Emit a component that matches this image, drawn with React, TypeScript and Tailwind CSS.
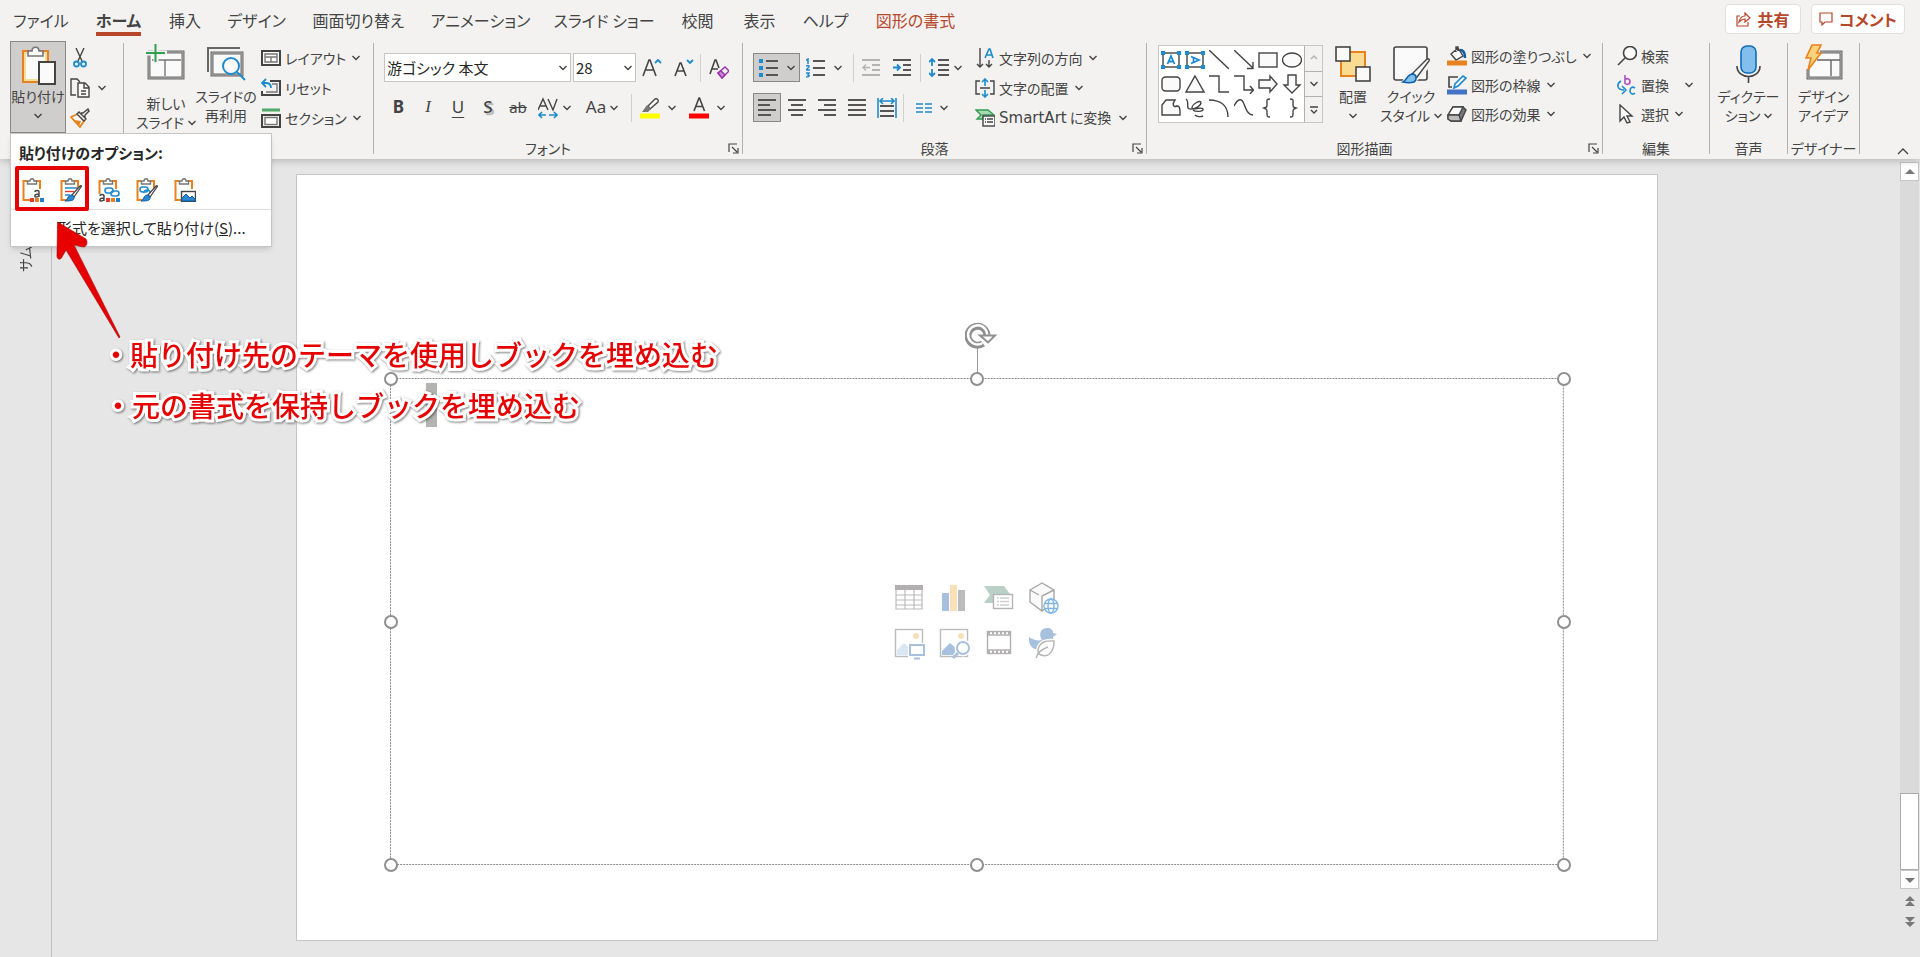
import type { ReactNode } from "react";

const INK = "#444444";
const BLUE = "#1e8bcd";
const ORANGE = "#e8821e";

interface IconProps {
  w?: number;
  h?: number;
  children: ReactNode;
}

function Icon({ w = 20, h = 20, children }: IconProps) {
  return (
    <svg
      width={w}
      height={h}
      viewBox={`0 0 ${w} ${h}`}
      fill="none"
      stroke={INK}
      strokeWidth={1.4}
      className="shrink-0"
      aria-hidden="true"
    >
      {children}
    </svg>
  );
}

function Chevron() {
  return (
    <Icon w={8} h={6}>
      <path d="M0.500 1L4 4.500 7.500 1" />
    </Icon>
  );
}

function Divider() {
  return <div className="mt-0.5 h-[111px] w-px shrink-0 bg-[#b3b0ad]" />;
}

function ThinDivider() {
  return <div className="h-7 w-px shrink-0 bg-[#d2d0ce]" />;
}

function Launcher() {
  return (
    <button type="button" aria-label="ダイアログを開く" className="absolute right-[3px] bottom-px">
      <Icon w={11} h={11}>
        <path d="M1 9V1h8M4 4l5 5M10 5v5H5" strokeWidth={1.2} />
      </Icon>
    </button>
  );
}

interface GroupProps {
  label?: string;
  width: string;
  launcher?: boolean;
  children: ReactNode;
}

function Group({ label, width, launcher, children }: GroupProps) {
  return (
    <section className={`relative flex h-[114px] shrink-0 flex-col ${width}`}>
      <div className="flex h-[92px] shrink-0">{children}</div>
      {label && (
        <p className={`mt-1 shrink-0 text-center leading-[22px] ${launcher ? "pr-5" : ""}`}>{label}</p>
      )}
      {launcher && <Launcher />}
    </section>
  );
}

interface SmallButtonProps {
  icon: ReactNode;
  label: string;
  chevron?: boolean;
  wide?: boolean;
}

function SmallButton({ icon, label, chevron, wide }: SmallButtonProps) {
  return (
    <button type="button" className="flex flex-1 items-center gap-1 whitespace-nowrap">
      {icon}
      <span>{label}</span>
      {chevron && (
        <span className={wide ? "pl-3" : "pl-0.5"}>
          <Chevron />
        </span>
      )}
    </button>
  );
}

interface LargeButtonProps {
  icon: ReactNode;
  lines: string[];
  width: string;
  chevron?: "below" | "inline";
  low?: boolean;
  active?: boolean;
}

function LargeButton({ icon, lines, width, chevron, low, active }: LargeButtonProps) {
  return (
    <button
      type="button"
      className={`flex h-[92px] shrink-0 flex-col items-center whitespace-nowrap leading-[19px] ${width} ${
        active ? "bg-[#d0cecc] outline-1 -outline-offset-1 outline-[#8a8886]" : ""
      }`}
    >
      <span className={`flex h-[46px] items-center ${low ? "mb-[7px]" : ""}`}>{icon}</span>
      {lines.map((line, i) => (
        <span key={line} className="flex items-center gap-1">
          {line}
          {chevron === "inline" && i === lines.length - 1 && <Chevron />}
        </span>
      ))}
      {chevron === "below" && (
        <span className="flex h-[19px] items-center">
          <Chevron />
        </span>
      )}
    </button>
  );
}

/* ---------- clipboard ---------- */

const pasteIcon = (
  <Icon w={38} h={44}>
    <rect x="4" y="9" width="25" height="31" fill="#f8dc9a" stroke={ORANGE} strokeWidth="2" />
    <rect x="7" y="12" width="19" height="25" fill="#fafafa" stroke="none" />
    <path d="M9 14V9h4c0-5 7-5 7 0h4v5z" fill="#fafafa" stroke="#777" strokeWidth="1.6" />
    <rect x="20" y="20" width="16" height="22" fill="#fafafa" strokeWidth="2" />
  </Icon>
);

const cutIcon = (
  <Icon>
    <path d="M6 0l6 13M14 0L8 13" />
    <circle cx="6.500" cy="16" r="2.500" stroke={BLUE} strokeWidth="1.800" />
    <circle cx="13.500" cy="16" r="2.500" stroke={BLUE} strokeWidth="1.800" />
  </Icon>
);

const copyIcon = (
  <Icon>
    <path d="M6 17H1V1h6l3 3" />
    <path d="M8 5h7l4 4v10H8zM14 5v5h5M11 13h5M11 16h5" fill="#fafafa" />
  </Icon>
);

const formatPainterIcon = (
  <Icon>
    <path d="M1 9l7-3 6 7-4 6z" fill="#fafafa" stroke={ORANGE} strokeWidth="1.800" />
    <path d="M4 12l7 1-2 5z" fill={ORANGE} stroke="none" />
    <path d="M7 6l2-2 7 7-2 2zM11 5l2 0 5-4 1 2-4 4v3" fill="#fafafa" />
  </Icon>
);

/* clipboard outline shared by the paste option icons */
function Board() {
  return (
    <>
      <path d="M5 3H1.500v19H8M14 3h4v8" stroke={ORANGE} strokeWidth="2" />
      <path d="M5.500 6V3h2.500c0-3 4-3 4 0h2.500v3z" fill="#fff" stroke="#777" />
    </>
  );
}

function Brush() {
  return (
    <>
      <path d="M12 17l8-9c1-1 2 0 1 1l-7 10z" fill="#fff" strokeWidth="1.200" />
      <path d="M5 23c3-1 2-5 6-6 3 0 4 3 2 5-2 1-5 1-8 1z" fill="#2b88d0" stroke="#0f5ea8" strokeWidth="1" />
    </>
  );
}

function LinkMark() {
  return (
    <g stroke={BLUE} strokeWidth="1.600">
      <rect x="7" y="10" width="8" height="5" rx="2.500" />
      <rect x="13" y="13" width="8" height="5" rx="2.500" />
    </g>
  );
}

function Swatches() {
  return (
    <g stroke="none">
      <path d="M8 20h4v4H8z" fill="#e03c32" />
      <path d="M13 20h4v4h-4z" fill={ORANGE} />
      <path d="M18 20h4v4h-4z" fill="#1e7fd0" />
    </g>
  );
}

const pasteOptions = [
  {
    name: "貼り付け先のテーマを使用しブックを埋め込む",
    icon: (
      <Icon w={22} h={24}>
        <Board />
        <path d="M17 19v-5c0-2-4-2-4 0M17 16c-5 0-5 3-3 3 1.500 0 3-1 3-2" />
        <Swatches />
      </Icon>
    ),
  },
  {
    name: "元の書式を保持しブックを埋め込む",
    icon: (
      <Icon w={22} h={24}>
        <Board />
        <path d="M5 10h12M5 17h5" stroke={BLUE} />
        <path d="M5 13.500h9" stroke="#e03c32" />
        <Brush />
      </Icon>
    ),
  },
  {
    name: "貼り付け先テーマを使用しデータをリンク",
    icon: (
      <Icon w={22} h={24}>
        <Board />
        <path d="M0 16h8v8H0z" fill="#fff" stroke="none" />
        <LinkMark />
        <path d="M6 23v-5c0-2-4-2-4 0M6 20c-5 0-5 3-3 3 1.500 0 3-1 3-2" />
        <Swatches />
      </Icon>
    ),
  },
  {
    name: "元の書式を保持しデータをリンク",
    icon: (
      <Icon w={22} h={24}>
        <Board />
        <g stroke={BLUE} strokeWidth="1.600">
          <rect x="4" y="9" width="8" height="5" rx="2.500" />
          <path d="M8 15c-1-4 7-4 6 0" />
        </g>
        <Brush />
      </Icon>
    ),
  },
  {
    name: "図",
    icon: (
      <Icon w={22} h={24}>
        <Board />
        <rect x="7.500" y="13.500" width="14" height="10" fill="#fff" />
        <path d="M8 23v-3l4-4 4 4 2-2 3 3v2z" fill="#2b88d0" stroke="#0f5ea8" strokeWidth="1" />
      </Icon>
    ),
  },
];

function PasteMenu() {
  return (
    <div className="absolute top-[92px] left-2.5 z-20 w-[262px] border border-[#c6c6c6] bg-white text-[15px] text-[#262626] shadow-md">
      <h2 className="px-2 pt-2 pb-1 leading-[22px] font-bold">貼り付けのオプション:</h2>
      <div className="flex h-[41px] gap-4 pt-2.5 pl-[11px]">
        {pasteOptions.map((option) => (
          <button key={option.name} type="button" aria-label={option.name} className="h-6">
            {option.icon}
          </button>
        ))}
      </div>
      <button type="button" className="block h-[37px] w-full border-t border-[#e1dfdd] pl-[46px] text-left">
        形式を選択して貼り付け(<u>S</u>)...
      </button>
    </div>
  );
}

/* ---------- slides ---------- */

const newSlideIcon = (
  <Icon w={40} h={40}>
    <rect x="3" y="8" width="34" height="26" fill="#fafafa" stroke="#6a6a6a" strokeWidth="3" />
    <rect x="3" y="8" width="34" height="26" stroke="#c4c4c4" strokeWidth="0.800" />
    <path d="M6 16h29M19 16v16" stroke="#777" />
    <path d="M0 9h21M10 0v20" stroke="#f3f2f1" strokeWidth="5" />
    <path d="M0 9h19M9.500 0v18" stroke="#2f9e4f" strokeWidth="2" />
  </Icon>
);

const reuseIcon = (
  <Icon w={40} h={40}>
    <path d="M2 28V4h32" stroke="#666" strokeWidth="2" />
    <rect x="6" y="9" width="30" height="22" fill="#fafafa" stroke="#6a6a6a" strokeWidth="3" />
    <rect x="6" y="9" width="30" height="22" stroke="#c4c4c4" strokeWidth="0.800" />
    <circle cx="25" cy="22" r="8" fill="#fafafa" stroke={BLUE} strokeWidth="2" />
    <path d="M31 28l8 8" stroke={BLUE} strokeWidth="2" />
  </Icon>
);

const layoutIcon = (
  <Icon>
    <rect x="1" y="3" width="18" height="14" fill="#fafafa" strokeWidth="2" />
    <path d="M4 6h12v8H4zM4 9h12M10 9v5" stroke="#777" />
  </Icon>
);

const resetIcon = (
  <Icon>
    <path d="M9 3h10v14H1v-4" strokeWidth="2" />
    <path d="M11 6h5v8H5" stroke="#777" />
    <path d="M5 1L1 5l4 4M1 5h4c4 0 5 2 5 5" stroke={BLUE} strokeWidth="1.800" />
  </Icon>
);

const sectionIcon = (
  <Icon>
    <path d="M1 2h18" stroke="#4fa866" strokeWidth="3" />
    <rect x="1" y="7" width="18" height="12" strokeWidth="2" />
    <rect x="4" y="9.500" width="12" height="7" fill="#fafafa" stroke="#777" />
  </Icon>
);

/* ---------- font ---------- */

const growFontIcon = (
  <Icon w={20} h={22}>
    <path d="M1 19L7 3h1l6 16M3 13h9" strokeWidth="1.600" />
    <path d="M13 6l3-3 3 3" stroke={BLUE} strokeWidth="1.800" />
  </Icon>
);

const shrinkFontIcon = (
  <Icon w={20} h={22}>
    <path d="M1 19L6 6h1l5 13M3 14h7" strokeWidth="1.600" />
    <path d="M13 3l3 3 3-3" stroke={BLUE} strokeWidth="1.800" />
  </Icon>
);

const clearFormatIcon = (
  <Icon w={20} h={22}>
    <path d="M1 17L6 3h1l3 8M3 12h6" strokeWidth="1.600" />
    <path d="M9 16l7-6 4 4-7 7z" fill="#f3f2f1" stroke="#9b2fae" />
    <path d="M9 16l3-2 4 4-3 3z" fill="#c98ad4" stroke="#9b2fae" />
  </Icon>
);

const spacingIcon = (
  <Icon w={20} h={22}>
    <path d="M0 13L5 2l5 11M2 9h6M10 2l5 11 4-11" />
    <path d="M8 18H1M4 15l-3 3 3 3M11 18h8M16 15l3 3-3 3" stroke={BLUE} strokeWidth="1.600" />
  </Icon>
);

const highlightIcon = (
  <Icon w={20} h={22}>
    <path d="M8 9l7-7c2-1 4 1 3 3l-8 7z" fill="#fafafa" />
    <path d="M7 8l4 4-3 3H2z" fill="#777" stroke="none" />
    <path d="M0 19h20" stroke="#ffff00" strokeWidth="5" />
  </Icon>
);

const fontColorIcon = (
  <Icon w={20} h={22}>
    <path d="M5 14L10 1h.500l5 13M7 9.500h7" strokeWidth="1.600" />
    <path d="M0 19h20" stroke="#ff0000" strokeWidth="5" />
  </Icon>
);

/* ---------- paragraph ---------- */

const bulletsIcon = (
  <Icon>
    <path d="M7 3h12M7 10h12M7 17h12" stroke="#555" strokeWidth="1.800" />
    <path d="M0 3h4M0 10h4M0 17h4" stroke={BLUE} strokeWidth="4" />
  </Icon>
);

const numberingIcon = (
  <Icon>
    <path d="M7 3h12M7 10h12M7 17h12" stroke="#555" strokeWidth="1.800" />
    <path
      d="M0 2l2-1v5M0 8c3-1 4 0 2 2l-2 2h4M0 15h3l-1 2c2 0 2 2-2 2"
      stroke={BLUE}
      strokeWidth="1.500"
    />
  </Icon>
);

const outdentIcon = (
  <Icon>
    <path d="M1 2h18M11 7h8M11 12h8M1 17h18" stroke="#b5b3b1" strokeWidth="1.800" />
    <path d="M9 9.500H2M5 6.500l-3 3 3 3" stroke="#b5b3b1" />
  </Icon>
);

const indentIcon = (
  <Icon>
    <path d="M1 2h18M11 7h8M11 12h8M1 17h18" stroke="#555" strokeWidth="1.800" />
    <path d="M1 9.500h7M5 6.500l3 3-3 3" stroke={BLUE} strokeWidth="1.800" />
  </Icon>
);

const lineSpacingIcon = (
  <Icon>
    <path d="M9 2h11M9 7h11M9 12h11M9 17h11" stroke="#555" strokeWidth="1.800" />
    <path d="M3 1v7M0 4l3-3 3 3M3 11v7M0 15l3 3 3-3" stroke={BLUE} strokeWidth="1.800" />
  </Icon>
);

function AlignIcon({ d }: { d: string }) {
  return (
    <Icon>
      <path d={d} stroke="#555" strokeWidth="1.800" />
    </Icon>
  );
}

const alignments = [
  { name: "左揃え", d: "M1 2h18M1 7h12M1 12h18M1 17h13", active: true },
  { name: "中央揃え", d: "M1 2h18M4 7h12M1 12h18M4 17h12" },
  { name: "右揃え", d: "M1 2h18M7 7h12M1 12h18M7 17h12" },
  { name: "両端揃え", d: "M1 2h18M1 7h18M1 12h18M1 17h18" },
];

const distributeIcon = (
  <Icon>
    <path d="M3 8h14M3 13h14M3 18h14" stroke="#555" strokeWidth="1.800" />
    <path d="M1 0v20M19 0v20M3 3h14M6 0L3 3l3 3M14 0l3 3-3 3" stroke={BLUE} strokeWidth="1.600" />
  </Icon>
);

const columnsIcon = (
  <Icon w={16} h={10}>
    <path d="M0 1h7M0 5h7M0 9h7M9 1h7M9 5h7M9 9h7" stroke={BLUE} strokeWidth="1.600" />
  </Icon>
);

const textDirectionIcon = (
  <Icon>
    <path d="M5 0v19M2 16l3 3 3-3M14 12v7M11 16l3 3 3-3" />
    <path d="M10 10l4-9h1l3 9M11 7h6" stroke={BLUE} strokeWidth="1.600" />
  </Icon>
);

const textAlignIcon = (
  <Icon>
    <path d="M5 3H1v13h4M15 3h4v13h-4M5 10h10" />
    <path d="M10 1v7M7 4l3-3 3 3M10 12v7M7 16l3 3 3-3" stroke={BLUE} strokeWidth="1.600" />
  </Icon>
);

const smartArtIcon = (
  <Icon>
    <path d="M1 2h12l6 5H8v4H2l4-4z" fill="#a8d8b5" stroke="#2f9e4f" />
    <rect x="8" y="8" width="12" height="10" fill="#fafafa" />
    <path d="M10 11h1M12 11h6M10 14h1M12 14h6" />
  </Icon>
);

/* ---------- drawing ---------- */

function TextBoxGlyph({ d }: { d: string }) {
  return (
    <>
      <rect x="2" y="3" width="16" height="14" fill="#fff" />
      <path d="M0 3h4M16 3h4M0 17h4M16 17h4" stroke={BLUE} strokeWidth="4" />
      <path d={d} stroke={BLUE} strokeWidth="1.800" />
    </>
  );
}

const shapes: { name: string; art: ReactNode }[] = [
  { name: "テキスト ボックス", art: <TextBoxGlyph d="M6.500 14L10 6l3.500 8M7.500 11.500h5" /> },
  { name: "縦書きテキスト ボックス", art: <TextBoxGlyph d="M6 6.500l8 3.500-8 3.500M8.500 7.500v5" /> },
  { name: "直線", art: <path d="M0 0l20 19" /> },
  { name: "矢印", art: <path d="M0 0l19 18M19 12v6.500h-6" /> },
  { name: "正方形", art: <rect x="1" y="3" width="18" height="14" fill="#fafafa" /> },
  { name: "楕円", art: <ellipse cx="10" cy="10" rx="9.500" ry="7" fill="#fafafa" /> },
  { name: "角丸四角形", art: <rect x="1" y="3" width="18" height="14" rx="3.500" fill="#fafafa" /> },
  { name: "三角形", art: <path d="M10 2l9 16H1z" fill="#fafafa" /> },
  { name: "カギ線コネクタ", art: <path d="M0 2h10v16h10" /> },
  { name: "カギ線矢印コネクタ", art: <path d="M0 2h10v14h9M16 12l3.500 4-3.500 4" /> },
  { name: "右矢印", art: <path d="M1 6h11V2l7 8-7 8v-4H1z" fill="#fafafa" /> },
  { name: "下矢印", art: <path d="M6 1h8v10h4l-8 8-8-8h4z" fill="#fafafa" /> },
  {
    name: "フリーフォーム",
    art: <path d="M5 2h9c-3 4-2 8 2 6 3 0 3 3 3 5v4H1V7z" fill="#fafafa" />,
  },
  {
    name: "フリーハンド",
    art: <path d="M1 1c3 2 1 7 2 9 3 3 12-1 13-5 0-4-9 1-9 5 1 3 9-2 11 1 1 3-8 3-10 1M10 17c2 2 6 2 8 1" />,
  },
  { name: "円弧", art: <path d="M0 2c12 0 19 6 19 17" /> },
  { name: "曲線", art: <path d="M0 8c4-8 8-8 10-2 3 8 5 11 9 11" /> },
  { name: "左中かっこ", art: <path d="M12 1c-4 0-3 2-3 5s0 3-3 4c3 1 3 2 3 5s0 4 3 4" /> },
  { name: "右中かっこ", art: <path d="M8 1c4 0 3 2 3 5s0 3 3 4c-3 1-3 2-3 5s0 4-3 4" /> },
];

const arrangeIcon = (
  <Icon w={38} h={38}>
    <rect x="7" y="7" width="24" height="24" fill="#f9dc92" stroke={ORANGE} strokeWidth="2" />
    <rect x="2" y="2" width="14" height="14" fill="#fafafa" strokeWidth="1.600" />
    <rect x="22" y="22" width="14" height="14" fill="#fafafa" strokeWidth="1.600" />
  </Icon>
);

const quickStyleIcon = (
  <Icon w={38} h={40}>
    <rect x="2" y="3" width="33" height="33" rx="2" fill="#fafafa" strokeWidth="1.600" />
    <path d="M34 14l4 9-14 15H10l4-9z" fill="#f3f2f1" stroke="none" />
    <path d="M20 30l14-14c2-2 4-1 3 1L25 33z" fill="#fafafa" />
    <path d="M11 38c4-2 4-8 10-8 4 1 4 6 1 8-3 1-7 1-11 0z" fill="#83bfec" stroke="#0f5ea8" strokeWidth="1.600" />
  </Icon>
);

const fillIcon = (
  <Icon>
    <path d="M4 8l7-6 5 8-7 4zM11 5V1h-2v5" fill="#fafafa" />
    <path d="M13 4c3 0 5 3 5 8" stroke="#0f5ea8" strokeWidth="2.500" />
    <path d="M0 17h20" stroke={ORANGE} strokeWidth="5" />
  </Icon>
);

const outlineIcon = (
  <Icon>
    <path d="M11 2H2v10h3" strokeWidth="1.600" />
    <path d="M7 13l1-4 8-8 3 2-8 8z" fill="#fafafa" stroke={BLUE} strokeWidth="1.600" />
    <path d="M0 17h20" stroke="#4472c4" strokeWidth="5" />
  </Icon>
);

const effectsIcon = (
  <Icon>
    <path d="M1 11L6 3h10l3 3-5 11H4l-3-2z" fill="#777" />
    <path d="M1 11L6 3h10l-4 8z" fill="#fafafa" />
    <path d="M1 11h11l2 6H4l-3-2z" fill="#bbbbbb" />
  </Icon>
);

/* ---------- editing, voice, designer ---------- */

const findIcon = (
  <Icon>
    <circle cx="13" cy="7" r="6.500" fill="#fafafa" strokeWidth="1.600" />
    <path d="M8 12l-7 7" strokeWidth="1.600" />
  </Icon>
);

const replaceIcon = (
  <Icon>
    <path d="M8 0v9M8 5c1-2 5-2 5 1.500S9 10 8 8" stroke="#b04fc0" strokeWidth="1.600" />
    <path d="M18 13c-3-2-5 0-5 3s3 4 5 2" stroke={BLUE} strokeWidth="1.600" />
    <path d="M4 6c-5 3-4 9 3 9M5 11l4 4-4 4" stroke={BLUE} strokeWidth="1.600" />
  </Icon>
);

const selectIcon = (
  <Icon>
    <path d="M3 1v16l4-4 3 6 3-1-3-6h5z" fill="#fafafa" />
  </Icon>
);

const micIcon = (
  <Icon w={26} h={40}>
    <rect x="5" y="2" width="15" height="27" rx="6" fill="#83bfec" stroke="#0f6cbd" strokeWidth="1.600" />
    <path d="M1 22c0 14 23 14 23 0M12.500 33v6" strokeWidth="1.600" />
  </Icon>
);

const designIcon = (
  <Icon w={38} h={40}>
    <path d="M15 8h21v26H3V25" fill="#fafafa" strokeWidth="3" stroke="#6a6a6a" />
    <path d="M15 8h21v26H3V25" stroke="#c4c4c4" strokeWidth="0.800" />
    <path d="M12 16h23M26 16v16" stroke="#666" />
    <path d="M7 1h9l-4 8h4L3 26l3-12H1z" fill="#f9d27a" stroke={ORANGE} strokeWidth="1.600" />
  </Icon>
);

/* ---------- top bar ---------- */

const tabs = [
  "ファイル",
  "ホーム",
  "挿入",
  "デザイン",
  "画面切り替え",
  "アニメーション",
  "スライド ショー",
  "校閲",
  "表示",
  "ヘルプ",
  "図形の書式",
];

function TabBar() {
  return (
    <div className="flex h-[41px] justify-between text-base">
      <nav className="grid grid-cols-[82px_73px_60px_83px_121px_123px_124px_63px_61px_71px_109px]">
        {tabs.map((tab) => (
          <a
            key={tab}
            href="#"
            className={`flex justify-center whitespace-nowrap pt-2 leading-6 ${
              tab === "ホーム" ? "font-bold" : ""
            } ${tab === "図形の書式" ? "text-[#b7472a]" : ""}`}
          >
            <span className={tab === "ホーム" ? "h-7 border-b-4 border-[#b7472a]" : ""}>{tab}</span>
          </a>
        ))}
      </nav>
      <div className="flex gap-2.5 pt-1 pr-[15px] font-bold text-[#b7472a]">
        <button
          type="button"
          className="flex h-[30px] w-[76px] items-center justify-center gap-1.5 rounded border border-[#e1dfdd] bg-white"
        >
          <Icon w={15} h={15}>
            <path
              d="M4 4H1v10h11v-4M3 10c1-4 3-6 6-6V1l5 5-5 4V7C6 7 5 8 3 10z"
              stroke="#b7472a"
              strokeWidth="1.200"
            />
          </Icon>
          共有
        </button>
        <button
          type="button"
          className="flex h-[30px] w-[94px] items-center justify-center gap-1.5 rounded border border-[#e1dfdd] bg-white"
        >
          <Icon w={14} h={14}>
            <path d="M1 1h12v9H6l-3 3v-3H1z" stroke="#b7472a" strokeWidth="1.200" />
          </Icon>
          コメント
        </button>
      </div>
    </div>
  );
}

function SelectBox({ label, value, width }: { label: string; value: string; width: string }) {
  return (
    <div className={`relative flex h-[29px] items-center border border-[#c8c6c4] bg-white ${width}`}>
      <select
        aria-label={label}
        defaultValue={value}
        className="h-full w-full appearance-none bg-transparent py-0 pl-0.5 text-[15px] leading-[27px] text-[#262626] outline-none"
      >
        <option>{value}</option>
      </select>
      <span className="pointer-events-none absolute right-[3px]">
        <Chevron />
      </span>
    </div>
  );
}

function Ribbon() {
  return (
    <div className="flex h-[118px] text-sm">
      <Group width="w-[123px]">
        <div className="pl-2.5">
          <LargeButton icon={pasteIcon} lines={["貼り付け"]} width="w-14" chevron="below" active />
        </div>
        <div className="flex flex-col pt-0.5 pl-1">
          <button type="button" aria-label="切り取り" className="flex h-[30px] items-center">
            {cutIcon}
          </button>
          <button type="button" aria-label="コピー" className="flex h-[30px] items-center gap-2">
            {copyIcon}
            <Chevron />
          </button>
          <button type="button" aria-label="書式のコピー" className="flex h-[30px] items-center">
            {formatPainterIcon}
          </button>
        </div>
        <PasteMenu />
      </Group>
      <Divider />

      <Group width="w-[249px]">
        <div className="flex pl-3">
          <LargeButton icon={newSlideIcon} lines={["新しい", "スライド"]} width="w-[60px]" chevron="inline" low />
          <LargeButton icon={reuseIcon} lines={["スライドの", "再利用"]} width="w-[60px]" />
        </div>
        <div className="flex flex-col pt-0.5 pl-[5px]">
          <SmallButton icon={layoutIcon} label="レイアウト" chevron />
          <SmallButton icon={resetIcon} label="リセット" />
          <SmallButton icon={sectionIcon} label="セクション" chevron />
        </div>
      </Group>
      <Divider />

      <Group label="フォント" width="w-[368px]" launcher>
        <div className="flex flex-col gap-[11px] pt-3 pl-2.5">
          <div className="flex items-center">
            <SelectBox label="フォント" value="游ゴシック 本文" width="mr-0.5 w-[187px]" />
            <SelectBox label="フォント サイズ" value="28" width="w-[63px]" />
            <button type="button" aria-label="フォント サイズの拡大" className="flex w-8 justify-center">
              {growFontIcon}
            </button>
            <button type="button" aria-label="フォント サイズの縮小" className="flex w-8 justify-center">
              {shrinkFontIcon}
            </button>
            <ThinDivider />
            <button type="button" aria-label="書式のクリア" className="flex w-9 justify-center">
              {clearFormatIcon}
            </button>
          </div>
          <div className="flex h-[29px] items-center font-['Noto_Sans'] text-[17px]">
            <button type="button" className="w-[29px] font-bold">B</button>
            <button type="button" className="w-[30px] font-['Liberation_Serif'] italic">I</button>
            <button type="button" className="w-[30px] underline underline-offset-4">U</button>
            <button type="button" className="w-[30px] font-medium text-shadow-[2px_2px_1px_#aaaaaa]">S</button>
            <button type="button" className="w-[30px] text-[15px] line-through">ab</button>
            <button type="button" aria-label="文字の間隔" className="flex w-11 items-center gap-[5px] pl-[5px]">
              {spacingIcon}
              <Chevron />
            </button>
            <button type="button" className="flex w-12 items-center justify-center gap-1 pl-0.5">
              Aa
              <Chevron />
            </button>
            <span className="pl-1.5">
              <ThinDivider />
            </span>
            <button type="button" aria-label="蛍光ペンの色" className="flex w-[49px] items-center gap-2 pl-2">
              {highlightIcon}
              <Chevron />
            </button>
            <button type="button" aria-label="フォントの色" className="flex w-[49px] items-center gap-2 pl-2">
              {fontColorIcon}
              <Chevron />
            </button>
          </div>
        </div>
      </Group>
      <Divider />

      <Group label="段落" width="w-[403px]" launcher>
        <div className="flex w-[228px] shrink-0 flex-col gap-[11px] pt-3 pl-2.5">
          <div className="flex items-center">
            <button
              type="button"
              aria-label="箇条書き"
              className="flex h-[29px] w-[47px] items-center justify-center gap-2 border border-[#8a8886] bg-[#d0cecc]"
            >
              {bulletsIcon}
              <Chevron />
            </button>
            <button type="button" aria-label="段落番号" className="flex w-[53px] items-center gap-2 pl-1.5">
              {numberingIcon}
              <Chevron />
            </button>
            <ThinDivider />
            <button type="button" aria-label="インデントを減らす" className="flex w-[33px] justify-center">
              {outdentIcon}
            </button>
            <button type="button" aria-label="インデントを増やす" className="flex w-[33px] justify-center pr-1">
              {indentIcon}
            </button>
            <ThinDivider />
            <button type="button" aria-label="行間" className="flex w-11 items-center gap-[5px] pl-2">
              {lineSpacingIcon}
              <Chevron />
            </button>
          </div>
          <div className="flex items-center gap-0.5">
            {alignments.map((a) => (
              <button
                key={a.name}
                type="button"
                aria-label={a.name}
                className={`flex h-[29px] w-7 items-center justify-center ${
                  a.active ? "border border-[#8a8886] bg-[#d0cecc]" : ""
                }`}
              >
                <AlignIcon d={a.d} />
              </button>
            ))}
            <button type="button" aria-label="均等割り付け" className="flex w-7 justify-center">
              {distributeIcon}
            </button>
            <ThinDivider />
            <button type="button" aria-label="段組み" className="flex items-center gap-2 pl-2.5">
              {columnsIcon}
              <Chevron />
            </button>
          </div>
        </div>
        <div className="flex flex-col pt-0.5 pl-1">
          <SmallButton icon={textDirectionIcon} label="文字列の方向" chevron />
          <SmallButton icon={textAlignIcon} label="文字の配置" chevron />
          <button type="button" className="flex flex-1 items-center gap-1 whitespace-nowrap">
            {smartArtIcon}
            <span>
              <span className="font-['DejaVu_Sans'] text-[15px]">SmartArt</span> に変換
            </span>
            <span className="pl-1">
              <Chevron />
            </span>
          </button>
        </div>
      </Group>
      <Divider />

      <Group label="図形描画" width="w-[455px]" launcher>
        <div className="mt-1 ml-[11px] flex h-[78px] w-[165px] shrink-0 border border-[#c8c6c4] bg-white">
          <div className="grid flex-1 grid-cols-6 grid-rows-3 py-0.5">
            {shapes.map((shape) => (
              <button key={shape.name} type="button" aria-label={shape.name} className="flex items-center justify-center">
                <Icon>{shape.art}</Icon>
              </button>
            ))}
          </div>
          <div className="flex w-[18px] flex-col divide-y divide-[#b3b0ad] border-l border-[#b3b0ad] bg-[#f3f2f1]">
            <button type="button" aria-label="前の行" className="flex flex-1 items-center justify-center">
              <Icon w={8} h={6}>
                <path d="M1 4l3-3 3 3" stroke="#b3b0ad" />
              </Icon>
            </button>
            <button type="button" aria-label="次の行" className="flex flex-1 items-center justify-center">
              <Chevron />
            </button>
            <button type="button" aria-label="その他" className="flex flex-1 items-center justify-center">
              <Icon w={8} h={8}>
                <path d="M0 1h8M1 4l3 3 3-3" />
              </Icon>
            </button>
          </div>
        </div>
        <LargeButton icon={arrangeIcon} lines={["配置"]} width="w-[60px]" chevron="below" />
        <LargeButton icon={quickStyleIcon} lines={["クイック", "スタイル"]} width="w-14" chevron="inline" />
        <div className="flex flex-col pb-[5px] pl-2">
          <SmallButton icon={fillIcon} label="図形の塗りつぶし" chevron />
          <SmallButton icon={outlineIcon} label="図形の枠線" chevron />
          <SmallButton icon={effectsIcon} label="図形の効果" chevron />
        </div>
      </Group>
      <Divider />

      <Group label="編集" width="w-[106px]">
        <div className="flex flex-col pb-[5px] pl-3.5">
          <SmallButton icon={findIcon} label="検索" />
          <SmallButton icon={replaceIcon} label="置換" chevron wide />
          <SmallButton icon={selectIcon} label="選択" chevron />
        </div>
      </Group>
      <Divider />

      <Group label="音声" width="w-[77px]">
        <LargeButton icon={micIcon} lines={["ディクテー", "ション"]} width="w-full" chevron="inline" />
      </Group>
      <Divider />

      <Group label="デザイナー" width="w-[71px]">
        <LargeButton icon={designIcon} lines={["デザイン", "アイデア"]} width="w-full" />
      </Group>
      <Divider />

      <div className="flex flex-1 items-end justify-end pr-[11px] pb-1">
        <button type="button" aria-label="リボンを折りたたむ">
          <Icon w={12} h={8}>
            <path d="M1 7l5-5 5 5" />
          </Icon>
        </button>
      </div>
    </div>
  );
}

/* ---------- slide ---------- */

const contentIcons = [
  {
    name: "表の挿入",
    art: (
      <>
        <path d="M2 6h26v23H2zM2 15h26M2 20h26M2 25h26M11 10v19M20 10v19" stroke="#bdbbbb" strokeWidth="1.200" />
        <path d="M1 7.500h28" stroke="#b1afaf" strokeWidth="5" />
      </>
    ),
  },
  {
    name: "グラフの挿入",
    art: (
      <g stroke="none">
        <path d="M3 13h7v18H3z" fill="#a6c0de" />
        <path d="M11 5h7v26h-7z" fill="#f8e1b9" />
        <path d="M19 10h7v21h-7z" fill="#bdbcbc" />
      </g>
    ),
  },
  {
    name: "SmartArt グラフィックの挿入",
    art: (
      <>
        <path d="M0 6h20l6 8H10v9H0l6-8z" fill="#b9d1c7" stroke="none" />
        <rect x="9.500" y="14.500" width="19" height="14" fill="#fff" stroke="#b5b3b3" />
        <path d="M13 18h2M16 18h9M13 21.500h2M16 21.500h9M13 25h2M16 25h9" stroke="#d0d0d0" />
      </>
    ),
  },
  {
    name: "3D モデル",
    art: (
      <>
        <path d="M1 10l12-7 12 7v12l-12 9-12-9zM1 10l9 5M25 10l-12 6v15" fill="#fafafa" stroke="#a9a7a7" />
        <g stroke="#7fb6e0">
          <circle cx="22" cy="26" r="7" fill="#fff" />
          <ellipse cx="22" cy="26" rx="3" ry="7" />
          <path d="M15 23.500h14M15 28.500h14" />
        </g>
      </>
    ),
  },
  {
    name: "図の挿入",
    art: (
      <>
        <rect x="1.500" y="4.500" width="27" height="27" stroke="#bdbbbb" />
        <circle cx="22" cy="11" r="3" fill="#f8e1b9" stroke="none" />
        <path d="M3 30v-5l7-7 8 7v5z" fill="#dce7f4" stroke="none" />
        <rect x="14" y="18" width="17" height="17" fill="#fff" stroke="none" />
        <rect x="16" y="20" width="14" height="10" fill="#fff" stroke="#a6c0de" strokeWidth="2" />
        <path d="M20 33.500h6" stroke="#a6c0de" strokeWidth="2" />
      </>
    ),
  },
  {
    name: "オンライン画像",
    art: (
      <>
        <rect x="1.500" y="4.500" width="27" height="27" stroke="#bdbbbb" />
        <circle cx="22" cy="11" r="3" fill="#f8e1b9" stroke="none" />
        <path d="M3 30v-4l8-8 7 6-4 6z" fill="#a6c0de" stroke="none" />
        <circle cx="24" cy="23" r="6" fill="#fff" stroke="#fff" strokeWidth="5" />
        <circle cx="24" cy="23" r="6" fill="#fff" stroke="#a6c0de" strokeWidth="2" />
        <path d="M19 28l-5 5" stroke="#a6c0de" strokeWidth="3" />
      </>
    ),
  },
  {
    name: "ビデオの挿入",
    art: (
      <>
        <rect x="3.500" y="6.500" width="23" height="22" stroke="#b1afaf" />
        <path d="M3 10h24M3 25h24" stroke="#b1afaf" />
        <path d="M4 8.200h22M4 26.800h22" stroke="#b1afaf" strokeWidth="2.400" strokeDasharray="2 2" />
      </>
    ),
  },
  {
    name: "アイコンの挿入",
    art: (
      <>
        <path
          d="M0 12c4 3 9 4 13 3-4-6-1-12 5-12 4 0 6 2 6 5l4 1-4 3c1 8-4 13-13 13C4 25-1 20 0 12z"
          fill="#a6c0de"
          stroke="none"
        />
        <path d="M9 27c0-8 5-12 16-11 0 10-5 17-13 14-3-1-3-2-3-3z" fill="#fff" stroke="#fff" strokeWidth="4" />
        <path d="M9 27c0-8 5-12 16-11 0 10-5 17-13 14-3-1-3-2-3-3zM7 33c2-6 6-9 12-11" stroke="#b5b3b3" />
      </>
    ),
  },
];

const handles = [
  "-top-1.5 -left-1.5",
  "-top-1.5 left-1/2 -ml-[7px]",
  "-top-1.5 -right-[7px]",
  "top-1/2 -left-1.5 -mt-[7px]",
  "top-1/2 -right-[7px] -mt-[7px]",
  "-bottom-[7px] -left-1.5",
  "-bottom-[7px] left-1/2 -ml-[7px]",
  "-bottom-[7px] -right-[7px]",
];

function Slide() {
  return (
    <div className="flex aspect-[1362/767] w-full max-w-[1362px] border border-[#c6c6c6] bg-white px-[93px] pt-[203px] pb-[75px]">
      <div className="relative flex flex-1 items-center justify-center pb-1">
        <svg className="absolute inset-0 h-full w-full" aria-hidden="true">
          <rect
            x="0.500"
            y="0.500"
            width="99.900%"
            height="99.800%"
            fill="none"
            stroke="#8a8a8a"
            strokeDasharray="2 1"
          />
        </svg>
        {/* text cursor */}
        <div className="absolute top-[5px] left-9 h-11 w-[11px] bg-[#b5b2b2]" />
        <div className="absolute -top-9 left-1/2 h-9 w-px bg-[#999999]" />
        <div className="absolute -top-14 left-1/2 -ml-3">
          <svg width="33" height="27" viewBox="0 0 33 27" fill="none" stroke="#8f8f8f" aria-hidden="true">
            <path d="M22 13A9.500 9.500 0 1 0 18 21.500" strokeWidth="7" />
            <path d="M22 14A9.500 9.500 0 1 0 17.500 21" stroke="#ffffff" strokeWidth="2.500" />
            <path d="M15 13.500h15L23 20.500z" fill="#ffffff" strokeWidth="2" />
          </svg>
        </div>
        {handles.map((position) => (
          <span key={position} className={`absolute size-3.5 rounded-full border-2 border-[#8f8f8f] bg-white ${position}`} />
        ))}
        <div className="grid grid-cols-4 gap-x-3.5 gap-y-2.5">
          {contentIcons.map((item) => (
            <button key={item.name} type="button" aria-label={item.name}>
              <Icon w={31} h={35}>
                {item.art}
              </Icon>
            </button>
          ))}
        </div>
      </div>
    </div>
  );
}

function ScrollArrow({ d, label, boxed }: { d: string; label: string; boxed?: boolean }) {
  return (
    <button
      type="button"
      aria-label={label}
      className={`flex h-[19px] w-full shrink-0 items-center justify-center ${
        boxed ? "border border-[#c6c6c6] bg-white" : "mt-0.5"
      }`}
    >
      <svg width="10" height="10" viewBox="0 0 10 10" fill="#777777" aria-hidden="true">
        <path d={d} />
      </svg>
    </button>
  );
}

function ScrollBar() {
  return (
    <div className="flex w-5 shrink-0 flex-col pt-[3px] pr-px pb-[26px]">
      <ScrollArrow label="上へスクロール" d="M0 7h10L5 2z" boxed />
      <div className="flex flex-1 flex-col justify-end bg-[#dadada]">
        <div className="h-[77px] border border-[#ababab] bg-white" />
      </div>
      <ScrollArrow label="下へスクロール" d="M0 3h10L5 8z" boxed />
      <ScrollArrow label="前のスライド" d="M0 5h10L5 0zM0 10h10L5 5z" />
      <ScrollArrow label="次のスライド" d="M0 0h10L5 5zM0 5h10L5 10z" />
    </div>
  );
}

function Annotations() {
  return (
    <div className="pointer-events-none absolute inset-0 z-30">
      <div className="absolute top-[166px] left-[15px] h-[45px] w-[74px] rounded-xs border-4 border-[#e60000]" />
      <svg className="absolute top-[220px] left-[54px]" width="70" height="120" viewBox="0 0 70 120" aria-hidden="true">
        <path
          d="M3.500 2L32 19c2 3 1 8-3 8l-9-2 46 92-1 1L12 30l-4 7c-1 3-5 3-5-1z"
          fill="#e60000"
          stroke="#a80000"
          strokeWidth="0.600"
        />
      </svg>
      <div className="absolute top-[329px] left-[102px] flex flex-col whitespace-nowrap text-[28px] leading-[51px] font-medium text-[#e60000] [-webkit-text-stroke:6px_#ffffff] [font-feature-settings:normal] [paint-order:stroke_fill] drop-shadow-[1px_1px_1px_rgba(0,0,0,0.5)]">
        <p>・貼り付け先のテーマを使用しブックを埋め込む</p>
        <p className="pl-0.5">・元の書式を保持しブックを埋め込む</p>
      </div>
    </div>
  );
}

export default function App() {
  return (
    <div className="relative flex min-h-screen flex-col overflow-hidden bg-[#e6e6e6] font-['Noto_Sans_CJK_JP',sans-serif] text-[#444444] [font-feature-settings:'palt']">
      <header className="relative z-10 bg-[#f3f2f1] shadow-[0_1px_8px_rgba(0,0,0,0.25)]">
        <TabBar />
        <Ribbon />
      </header>
      <main className="flex flex-1">
        <aside className="w-[52px] shrink-0 border-r border-[#bebebe] pt-12 pl-3.5">
          <p className="rotate-180 text-sm leading-[22px] [writing-mode:vertical-rl] [text-orientation:sideways]">
            サムネイル
          </p>
        </aside>
        <div className="flex flex-1 items-start justify-center pt-[15px] pl-0.5">
          <Slide />
        </div>
        <ScrollBar />
      </main>
      <Annotations />
    </div>
  );
}
